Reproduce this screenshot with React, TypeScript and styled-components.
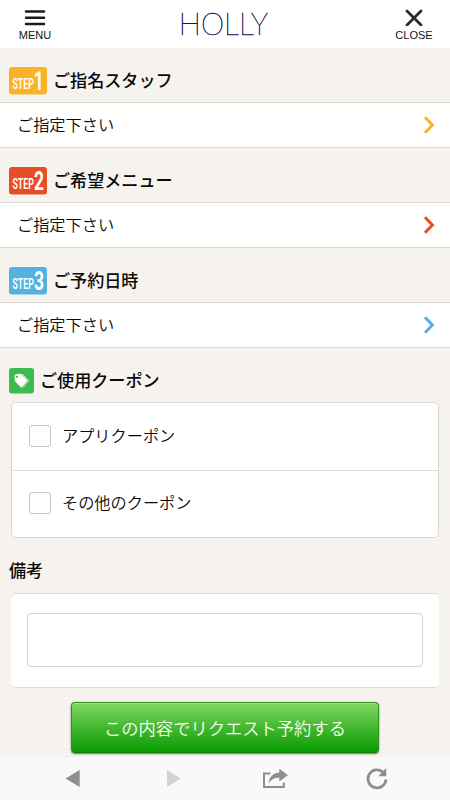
import React from "react";
import styled, { createGlobalStyle } from "styled-components";

const jp = `"Noto Sans CJK JP", "Liberation Sans", sans-serif`;

const GlobalStyle = createGlobalStyle`
  * { box-sizing: border-box; }
  body { margin: 0; background: #f6f3ee; }
`;

const Screen = styled.div`
  width: 450px;
  height: 800px;
  display: flex;
  flex-direction: column;
  overflow: hidden;
  font-family: ${jp};
  color: #0a0a0a;
  background-color: #f7f4f0;
  background-image: repeating-linear-gradient(
    180deg,
    rgba(225, 218, 205, 0.1) 0 1px,
    transparent 1px 4px
  );
`;

const Header = styled.header`
  flex: none;
  height: 48px;
  display: grid;
  grid-template-columns: 70px 1fr 72px;
  background: #fff;
`;

const HeaderButton = styled.button`
  border: 0;
  background: none;
  padding: 9px 0 0;
  display: flex;
  flex-direction: column;
  align-items: center;
  font: 11px/14px "Liberation Sans", sans-serif;
  color: #111;

  svg { display: block; margin-bottom: 2px; }
`;

const Brand = styled.div`
  display: flex;
  justify-content: center;

  svg { display: block; }
`;

const Main = styled.main`
  flex: 1;
  min-height: 0;
  display: flex;
  flex-direction: column;
`;

const Heading = styled.h2<{ $height?: number }>`
  flex: none;
  margin: 0;
  height: ${(p) => p.$height ?? 54}px;
  padding: 11px 9px 0;
  display: flex;
  align-items: center;
  gap: 6px;
  font-size: 17.1px;
  font-weight: 500;
  line-height: 26px;
  white-space: nowrap;

  svg { display: block; flex: none; }
`;

const Label = styled.span`
  padding-bottom: 2px;
`;

const SelectRow = styled.div`
  flex: none;
  height: 46px;
  padding: 0 15px 0 17px;
  display: flex;
  align-items: center;
  justify-content: space-between;
  border: solid #dcd8d6;
  border-width: 1px 0;
  background: #fff;
  font-size: 16.2px;
  font-weight: 350;

  svg { display: block; }
`;

const CouponList = styled.div`
  flex: none;
  margin: 0 11px;
  height: 136px;
  border: 1px solid #d9d6d4;
  border-radius: 5px;
  background: #fff;
  display: flex;
  flex-direction: column;
`;

const CouponRow = styled.label`
  flex: 1;
  display: flex;
  align-items: center;
  gap: 11px;
  padding: 0 0 1px 17px;
  font-size: 16.2px;
  font-weight: 350;

  & + & { border-top: 1px solid #dedede; }
`;

const Checkbox = styled.input`
  appearance: none;
  margin: 0;
  width: 22px;
  height: 22px;
  border: 1px solid #c6c6c6;
  border-radius: 3px;
  background: #fff;
`;

const NotesCard = styled.div`
  flex: none;
  margin: 0 11px;
  height: 95px;
  padding: 19px 16px;
  border: solid #dcdad8;
  border-width: 1px 0;
  border-radius: 5px;
  background: #fff;
`;

const Notes = styled.textarea`
  display: block;
  width: 100%;
  height: 54px;
  border: 1px solid #d3d3d5;
  border-radius: 4px;
  background: #fff;
  resize: none;
`;

const Submit = styled.button`
  flex: none;
  align-self: center;
  width: 308px;
  height: 51px;
  margin: 14px 0 0;
  padding: 0;
  border: 1px solid #2f8f1c;
  border-bottom-color: #0e7d05;
  border-radius: 4px;
  background: linear-gradient(180deg, #82d862 0%, #46b933 48%, #0a9c03 100%);
  box-shadow: inset 0 1px 0 #a5e48c, 0 1px 2px rgba(40, 40, 20, 0.65);
  color: #f4fff0;
  font: 350 17.3px/26px ${jp};
  white-space: nowrap;
`;

const Toolbar = styled.nav`
  flex: none;
  height: 43px;
  background: #f9f9f9;
  display: grid;
  grid-template-columns: 145px 56px 146px 60px;

  svg { display: block; width: 100%; height: 43px; }
`;

type Step = { no: string; color: string; title: string };

const steps: Step[] = [
  { no: "1", color: "#fbb22b", title: "ご指名スタッフ" },
  { no: "2", color: "#e64e27", title: "ご希望メニュー" },
  { no: "3", color: "#55b1df", title: "ご予約日時" },
];

const StepBadge = ({ no, color }: { no: string; color: string }) => (
  <svg width="38" height="28" viewBox="0 0 38 28">
    <rect width="38" height="27.5" rx="3" fill={color} />
    <g fill="#fff" fontFamily="Roboto, sans-serif">
      <text x="3.4" y="22.3" fontSize="14.4" fontWeight="600" textLength="21.4" lengthAdjust="spacingAndGlyphs">STEP</text>
      <text x={no === "1" ? 24.8 : 25} y="23.3" fontSize="25.5" fontWeight="700" textLength="10" lengthAdjust="spacingAndGlyphs">{no}</text>
    </g>
  </svg>
);

const Chevron = ({ color }: { color: string }) => (
  <svg width="12" height="20" viewBox="0 0 12 20">
    <path d="M2 2.2 9.4 10 2 17.8" fill="none" stroke={color} strokeWidth="3" />
  </svg>
);

export default function App() {
  return (
    <Screen>
      <GlobalStyle />
      <Header>
        <HeaderButton>
          <svg width="22" height="17" viewBox="0 0 22 17">
            <path d="M2 2.5H20M2 8.7H20M2 15H20" stroke="#1c1c1c" strokeWidth="2.5" strokeLinecap="round" />
          </svg>
          MENU
        </HeaderButton>
        <Brand>
          <svg width="94" height="48" viewBox="0 0 94 48">
            <text x="1.8" y="34.8" fontFamily="Lato, sans-serif" fontSize="31" fontWeight="200" textLength="89" lengthAdjust="spacingAndGlyphs" fill="#17174f" stroke="#17174f" strokeWidth="0.6">HOLLY</text>
          </svg>
        </Brand>
        <HeaderButton>
          <svg width="18" height="17" viewBox="0 0 18 17">
            <path d="M2 2 16 16M16 2 2 16" stroke="#2b2b2b" strokeWidth="2.8" strokeLinecap="round" />
          </svg>
          CLOSE
        </HeaderButton>
      </Header>
      <Main>
        {steps.map((s) => (
          <React.Fragment key={s.no}>
            <Heading>
              <StepBadge no={s.no} color={s.color} />
              <Label>{s.title}</Label>
            </Heading>
            <SelectRow>
              <Label>ご指定下さい</Label>
              <Chevron color={s.color} />
            </SelectRow>
          </React.Fragment>
        ))}
        <Heading>
          <svg width="25" height="26" viewBox="0 0 25 26">
            <rect width="25" height="25.5" rx="3" fill="#3dbb50" />
            <path d="M6 7.2 11.5 6 18 12.6 12.4 19.2 6.3 13Z" fill="#fff" stroke="#fff" strokeLinejoin="round" />
            <path d="M13 6 19.5 12.7 13.9 19.6" fill="none" stroke="#fff" strokeWidth=".8" />
            <circle cx="8" cy="8.8" r="1.1" fill="#3dbb50" />
          </svg>
          <Label>ご使用クーポン</Label>
        </Heading>
        <CouponList>
          <CouponRow><Checkbox type="checkbox" /><Label>アプリクーポン</Label></CouponRow>
          <CouponRow><Checkbox type="checkbox" /><Label>その他のクーポン</Label></CouponRow>
        </CouponList>
        <Heading $height={55}><Label>備考</Label></Heading>
        <NotesCard><Notes /></NotesCard>
        <Submit>この内容でリクエスト予約する</Submit>
      </Main>
      <Toolbar>
        <svg viewBox="0 0 145 43"><path d="M65.5 21.5 79.7 13V30Z" fill="#8e8e8e" /></svg>
        <svg viewBox="0 0 56 43"><path d="M36 21.5 22 13V30Z" fill="#d3d3d3" /></svg>
        <svg viewBox="0 0 146 43">
          <path d="M69.5 16.5H63V30H82.8V25.5" fill="none" stroke="#8e8e8e" strokeWidth="2" />
          <path d="M67.5 26.5C68.5 18.5 73 15.6 78.3 15.4V11.8L87 18.2 78.3 24.6V20.8C73.5 20.5 70 22.3 67.5 26.5Z" fill="#8e8e8e" />
        </svg>
        <svg viewBox="0 0 60 43">
          <path d="M36.1 15.2A9 9 0 1 0 39 22.5" fill="none" stroke="#8e8e8e" strokeWidth="2.8" />
          <path d="M39.2 11V19.2H31.2Z" fill="#8e8e8e" />
        </svg>
      </Toolbar>
    </Screen>
  );
}
